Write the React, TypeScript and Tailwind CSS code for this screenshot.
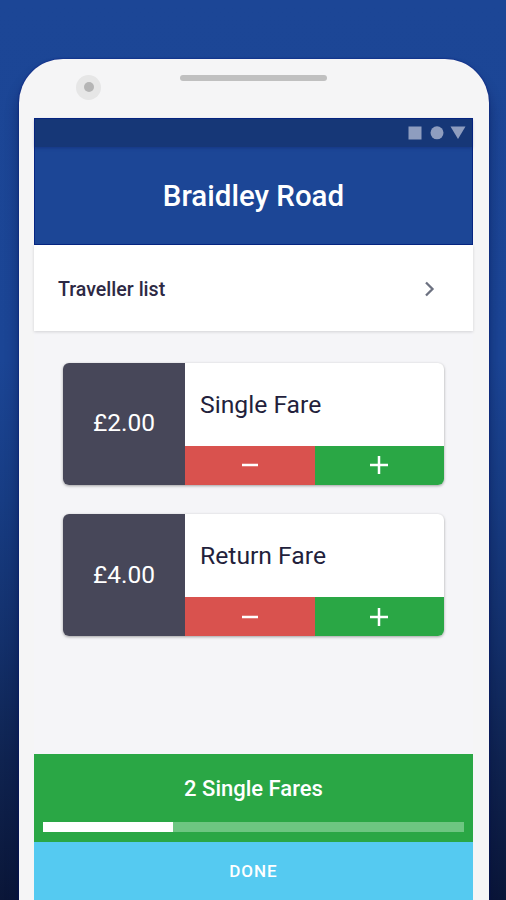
import React from "react";

function StatusBar() {
  return (
    <div className="flex h-[28px] items-start justify-end bg-[#163777] pr-[6.5px] pt-[6.5px] shadow-[0_1px_3px_rgba(10,30,100,0.4)]">
      <svg width="58" height="14" viewBox="0 0 58 14" fill="#8e9dbf">
        <rect x="0.5" y="0.5" width="13" height="13" />
        <circle cx="29" cy="6.8" r="6.5" />
        <path d="M42.5 0.5H57.5L50 13Z" />
      </svg>
    </div>
  );
}

function Minus() {
  return (
    <svg width="20" height="20" viewBox="0 0 20 20" stroke="#fff" strokeWidth="2.5">
      <path d="M2 10H18" />
    </svg>
  );
}

function Plus() {
  return (
    <svg width="20" height="20" viewBox="0 0 20 20" stroke="#fff" strokeWidth="2.5">
      <path d="M1 10H19M10 1V19" />
    </svg>
  );
}

function FareCard({ price, name }: { price: string; name: string }) {
  return (
    <div className="flex h-[122px] overflow-hidden rounded-[6px] bg-white shadow-[0_1px_3px_rgba(0,0,0,0.35)]">
      <div className="flex w-[122px] items-center justify-center bg-[#474759] text-[24.5px] text-white">
        {price}
      </div>
      <div className="flex flex-1 flex-col">
        <div className="flex flex-1 items-center pl-[15px] text-[24.7px] text-[#231f3c]">{name}</div>
        <div className="flex h-[39px]">
          <button className="flex w-[129.5px] items-center justify-center bg-[#d9524e]">
            <Minus />
          </button>
          <button className="flex flex-1 items-center justify-center bg-[#2aa745]">
            <Plus />
          </button>
        </div>
      </div>
    </div>
  );
}

export default function App() {
  return (
    <div className="flex h-[900px] w-full overflow-hidden bg-[linear-gradient(180deg,#1c4696_0,#1b4595_360px,#173c83_500px,#13306b_640px,#0f2350_760px,#0a1638_900px)] pl-[18.5px] pt-[58.5px] font-['Roboto',sans-serif]">
      <div className="flex h-[900px] w-[470.5px] shrink-0 flex-col rounded-t-[44px] bg-[#f5f5f6] pl-[15.5px] pr-[16px] shadow-[0_0_2px_#00107a,0_12px_14px_rgba(0,10,60,0.45)]">
        <div className="flex h-[59.5px] shrink-0 items-start">
          <div className="ml-[42px] mt-[16px] flex size-[25px] items-center justify-center rounded-full bg-[#e6e6e6]">
            <div className="size-[10px] rounded-full bg-[#b5b5b5]" />
          </div>
          <div className="ml-[79px] mt-[16px] h-[6.5px] w-[147px] rounded-full bg-[#c0c0c0]" />
        </div>

        <div className="flex h-[782px] shrink-0 flex-col bg-[#f5f5f8]">
          <header className="flex h-[127px] flex-col border border-[#062583] bg-[#1c4696]">
            <StatusBar />
            <h1 className="flex flex-1 items-center justify-center pt-[2px] text-[29.5px] font-medium text-white">
              Braidley Road
            </h1>
          </header>

          <div className="flex h-[86px] items-center justify-between bg-white pl-[24px] pr-[38px] pt-[2px] text-[19.6px] font-medium text-[#2d2944] shadow-[0_1px_3px_rgba(0,0,0,0.14)]">
            <span className="pt-[2px]">Traveller list</span>
            <svg width="11" height="16" viewBox="0 0 11 16" fill="none" stroke="#6c7180" strokeWidth="2.3">
              <path d="M2 1.5L8.5 8L2 14.5" />
            </svg>
          </div>

          <main className="flex flex-1 flex-col gap-[29.5px] px-[29px] pt-[31.7px]">
            <FareCard price="£2.00" name="Single Fare" />
            <FareCard price="£4.00" name="Return Fare" />
          </main>

          <footer>
            <div className="flex h-[87.5px] flex-col bg-[#2aa745] px-[9px] pb-[9.5px]">
              <div className="flex flex-1 items-center justify-center pt-px text-[22px] font-medium text-white">
                2 Single Fares
              </div>
              <div className="h-[10.5px] bg-[#6dc681]">
                <div className="h-full w-[130px] bg-white" />
              </div>
            </div>
            <button className="flex h-[58.5px] w-full items-center justify-center bg-[#55caf1] pt-[2px] text-[17px] font-medium tracking-[1px] text-white">
              DONE
            </button>
          </footer>
        </div>
      </div>
    </div>
  );
}
